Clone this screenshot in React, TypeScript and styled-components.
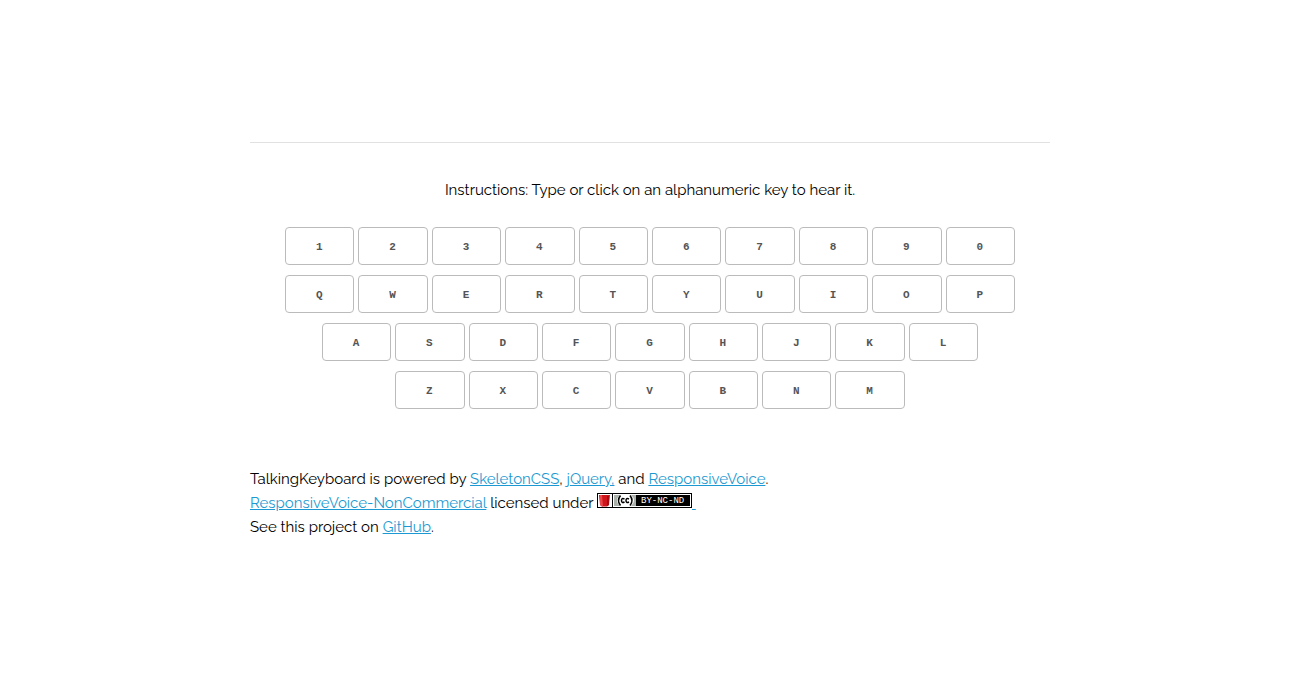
import React from 'react';
import styled, { createGlobalStyle } from 'styled-components';

const GlobalStyle = createGlobalStyle`
  * { box-sizing: border-box; }
  body {
    margin: 0;
    background: #fff;
    color: #000;
    font-family: Raleway, Lato, "Open Sans", sans-serif;
    font-size: 15px;
    line-height: 24px;
  }
`;

const Container = styled.main`
  width: 100%;
  max-width: 800px;
  margin: 0 auto;
  padding-top: 142px;
`;

const Divider = styled.hr`
  margin: 0 0 35px;
  border: 0;
  border-top: 1px solid #e1e1e1;
`;

const Instructions = styled.p`
  margin: 0 0 25px;
  text-align: center;
`;

const Keyboard = styled.div`
  display: flex;
  flex-direction: column;
  gap: 10px;
  max-width: 730px;
  margin: 0 auto;
`;

const KeyRow = styled.div`
  display: flex;
  justify-content: center;
  gap: 4px;
`;

const Key = styled.button`
  flex: 0 0 calc((100% - 36px) / 10);
  height: 38px;
  padding: 0 1px 0 0;
  border: 1px solid #bbb;
  border-radius: 4px;
  background: transparent;
  color: #555;
  font-family: "Courier New", "Liberation Mono", monospace;
  font-size: 11px;
  font-weight: 600;
  line-height: 38px;
  text-transform: uppercase;
  cursor: pointer;
`;

const Credits = styled.footer`
  padding: 58px 0 24px;
`;

const Line = styled.p`
  margin: 0;
`;

const Link = styled.a`
  color: #1c99d2;
  text-decoration: underline;
`;

const Badge = styled.svg`
  display: inline-block;
  width: 95px;
  height: 15px;
`;

const rows = ['1234567890', 'QWERTYUIOP', 'ASDFGHJKL', 'ZXCVBNM'];

const LicenseBadge = () => (
  <Badge viewBox="0 0 95 15" role="img" aria-label="Creative Commons BY-NC-ND">
    <rect width="95" height="15" fill="#000" />
    <rect x="1" y="1" width="93" height="13" fill="#fff" />
    <path d="M2 2h11l-1 10-2 1.500H5L3 12z" fill="#d0141c" />
    <path d="M3 2h2l1 11.500H5L3 12z" fill="#e8474c" />
    <path d="M10 3h2v9l-2 1z" fill="#a30c13" />
    <rect x="15" y="0" width="1" height="15" fill="#000" />
    <rect x="17" y="2" width="22" height="11" fill="#aab2ab" />
    <rect x="39" y="2" width="54" height="11" fill="#000" />
    <path d="M23 2h12q3 2.500 3 5.500t-3 5.500H23q-3-2.500-3-5.500t3-5.500z" fill="#aab2ab" />
    <path d="M23 2h11q3 2.500 3 5.500t-3 5.500H23q-3-2.500-3-5.500t3-5.500z" fill="#fff" />
    <path d="M23.500 2.500q-4 5 0 10M33 2.500q4 5 0 10" fill="none" stroke="#000" strokeWidth="1.600" />
    <path d="M27.500 6q-3-1.500-3 1.500t3 1.500M32 6q-3-1.500-3 1.500t3 1.500" fill="none" stroke="#000" strokeWidth="1.500" />
    <text x="44" y="10" fontFamily="Liberation Mono, monospace" fontSize="9" fill="#fff">BY-NC-ND</text>
  </Badge>
);

export default function App() {
  return (
    <>
      <GlobalStyle />
      <Container>
        <Divider />
        <Instructions>Instructions: Type or click on an alphanumeric key to hear it.</Instructions>
        <Keyboard>
          {rows.map((row) => (
            <KeyRow key={row}>
              {row.split('').map((label) => (
                <Key type="button" key={label}>{label}</Key>
              ))}
            </KeyRow>
          ))}
        </Keyboard>
        <Credits>
          <Line>
            TalkingKeyboard is powered by <Link href="#skeleton">SkeletonCSS</Link>, <Link href="#jquery">jQuery,</Link> and{' '}
            <Link href="#responsivevoice">ResponsiveVoice</Link>.
          </Line>
          <Line>
            <Link href="#noncommercial">ResponsiveVoice-NonCommercial</Link> licensed under{' '}
            <Link href="#license"><LicenseBadge />&nbsp;</Link>
          </Line>
          <Line>
            See this project on <Link href="#github">GitHub</Link>.
          </Line>
        </Credits>
      </Container>
    </>
  );
}
